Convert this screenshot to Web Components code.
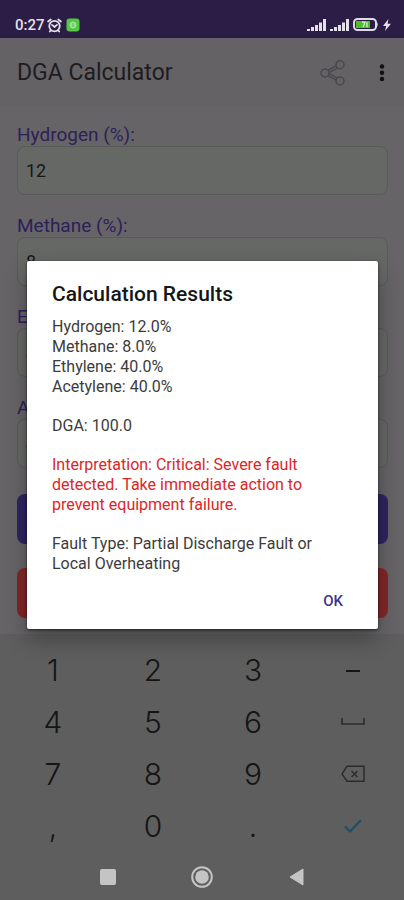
<!DOCTYPE html>
<html lang="en">
<head>
<meta charset="utf-8">
<meta name="viewport" content="width=device-width, initial-scale=1">
<title>DGA Calculator</title>
<style>
  body { margin: 0; font-family: Roboto, "Liberation Sans", sans-serif; background: #676468; }
</style>
</head>
<body>
<dga-app></dga-app>

<script>
const define = (name, html, setup) => {
  const template = document.createElement('template');
  template.innerHTML = html;
  customElements.define(name, class extends HTMLElement {
    constructor() {
      super();
      this.attachShadow({ mode: 'open' }).append(template.content.cloneNode(true));
    }
    connectedCallback() { if (setup) setup(this, this.shadowRoot); }
  });
};

define('status-bar', `
<style>
  :host { display: flex; justify-content: space-between; height: 38px; box-sizing: border-box;
    padding: 12px 13px 0 15px; background: #2b1d45; color: #e4e0ea; }
  div { display: flex; align-items: center; height: 26px; }
  time { font-size: 15px; font-weight: 500; line-height: 20px; }
  .left { gap: 2px; }
  .right { gap: 4px; }
  svg { display: block; }
  .app { margin-left: 2px; }
</style>
<div class="left">
  <time>0:27</time>
  <svg width="15" height="15" viewBox="0 0 16 16" fill="none" stroke="#e4e0ea" stroke-width="1.9" stroke-linecap="round">
    <circle cx="8" cy="8.6" r="5.6"/><path d="M1.2 3.8 4 1.6M14.8 3.8 12 1.6M5.4 7.4 8 9.6l2.6-2.2M4 13.2l-1 1.2M12 13.2l1 1.2"/>
  </svg>
  <svg class="app" width="14" height="14" viewBox="0 0 14 14">
    <rect x=".5" y=".5" width="13" height="13" rx="3" fill="#55c746"/>
    <circle cx="7" cy="7" r="3" fill="#8fe084" stroke="#a5e99c"/><path d="M7 5v4" stroke="#55c746"/>
  </svg>
</div>
<div class="right">
  <svg width="19" height="13" viewBox="0 0 19 13" fill="#e4e0ea"><path d="M0 10h3v2H0zM4 8h3v4H4zM8 6h3v6H8zM12 3.500h3V12h-3zM16 0h3v12h-3z"/></svg>
  <svg width="19" height="13" viewBox="0 0 19 13" fill="#e4e0ea"><path d="M0 10h3v2H0zM4 8h3v4H4zM8 6h3v6H8zM12 3.500h3V12h-3zM16 0h3v12h-3z"/></svg>
  <svg width="26" height="14" viewBox="0 0 26 14">
    <rect x="1" y="1" width="22" height="11" rx="3.500" fill="#2b1d45" stroke="#dedbe2" stroke-width="2"/>
    <path d="M23.500 3.500q2.500 3 0 6z" fill="#dedbe2"/>
    <rect x="3" y="3" width="14" height="7" fill="#4cc02c"/>
    <path d="M9 4.200h3l-2 5M14 4.200v5" fill="none" stroke="#d9f5d0" stroke-width="1.200"/>
  </svg>
  <svg width="8" height="12" viewBox="0 0 8 12" fill="#e4e0ea"><path d="M5.400 0 0 7h3.200L2 12l6-7.200H4.600z"/></svg>
</div>
`);

define('app-bar', `
<style>
  :host { display: flex; align-items: center; height: 68px; box-sizing: border-box; padding: 2px 13px 0 17px;
    background: #646265; color: #1e1c20; }
  h1 { margin: 0; flex: 1; font-size: 23px; font-weight: 400; line-height: 28px; }
  button { border: 0; padding: 0; background: none; display: block; }
  .share { margin-right: 27px; }
  svg { display: block; }
</style>
<h1><slot></slot></h1>
<button class="share" aria-label="Share">
  <svg width="26" height="26" viewBox="0 0 26 26" fill="none" stroke="#49474b" stroke-width="1.400">
    <circle cx="5" cy="13" r="4"/><circle cx="20" cy="4.800" r="4"/><circle cx="20" cy="21" r="4"/>
    <path d="M8 10.400 15.800 5.900M9 12.700 17.200 8M8 15.600l8 4.300M9 13.400l8.200 4.600"/>
  </svg>
</button>
<button aria-label="More options">
  <svg width="18" height="20" viewBox="0 0 18 20" fill="#111013"><circle cx="9" cy="3.500" r="2.200"/><circle cx="9" cy="9.800" r="2.200"/><circle cx="9" cy="16" r="2.200"/></svg>
</button>
`);

define('gas-field', `
<style>
  :host { display: block; }
  label { display: block; font-size: 19px; line-height: 22px; color: #2c2158; }
  input { display: block; width: 100%; height: 49px; box-sizing: border-box; padding: 0 8px; margin: 0; outline: 0;
    border: 1px solid #595b59; border-radius: 8px; background: #666866; color: #181818;
    font-family: inherit; font-size: 18px; }
</style>
<label for="value"></label>
<input id="value" inputmode="decimal">
`, (host, root) => {
  root.querySelector('label').textContent = host.getAttribute('label');
  root.querySelector('input').value = host.getAttribute('value');
});

define('action-button', `
<style>
  :host { display: block; }
  button { display: block; width: 100%; height: 50px; border: 0; border-radius: 8px; background: var(--fill); }
</style>
<button></button>
`, (host, root) => root.querySelector('button').setAttribute('aria-label', host.getAttribute('label')));

define('gas-form', `
<style>
  :host { display: flex; flex-direction: column; gap: 20px; padding: 18px 16px 16px 17px; flex: 1; background: #676468; }
  .actions { display: flex; flex-direction: column; gap: 24px; margin-top: 6px; }
</style>
<gas-field label="Hydrogen (%):" value="12"></gas-field>
<gas-field label="Methane (%):" value="8"></gas-field>
<gas-field label="Ethylene (%):" value="40"></gas-field>
<gas-field label="Acetylene (%):" value="40"></gas-field>
<div class="actions">
  <action-button label="Calculate" style="--fill:#2e2560"></action-button>
  <action-button label="Clear" style="--fill:#822628"></action-button>
</div>
`);

define('number-pad', `
<style>
  :host { display: grid; grid-template-columns: repeat(4, 1fr); grid-auto-rows: 52px; padding: 10px 1px 2px 3px; background: #5e5e5e; }
  button { border: 0; padding: 0; background: none; color: #151515; display: flex; align-items: center; justify-content: center;
    font-family: Inter, "Liberation Sans", sans-serif; font-size: 30px; line-height: 40px; font-weight: 300; }
  svg { display: block; fill: none; }
</style>
<button>1</button><button>2</button><button>3</button>
<button aria-label="Minus"><svg width="14" height="4" stroke="#151515" stroke-width="2"><path d="M0 3h14"/></svg></button>
<button>4</button><button>5</button><button>6</button>
<button aria-label="Space"><svg width="24" height="8" stroke="#2b2b2b" stroke-width="1.600"><path d="M1 0v6h22V0"/></svg></button>
<button>7</button><button>8</button><button>9</button>
<button aria-label="Delete"><svg width="24" height="18" viewBox="0 0 24 18" stroke="#2b2b2b" stroke-width="1.400"><path d="M6 1.200h17v15H6L1 9zM10.500 6l6 6M16.500 6l-6 6"/></svg></button>
<button>,</button><button>0</button><button>.</button>
<button aria-label="Done"><svg width="18" height="14" viewBox="0 0 18 14" stroke="#174f70" stroke-width="2"><path d="M1 7.500 6 12.500 17 1"/></svg></button>
`);

define('nav-bar', `
<style>
  :host { display: grid; grid-template-columns: repeat(3, 94px); justify-content: center; align-items: center; height: 46px;
    background: #5e5e5e; }
  button { border: 0; padding: 0; background: none; display: flex; justify-content: center; }
  svg { display: block; }
</style>
<button aria-label="Recent apps"><svg width="16" height="16"><rect width="16" height="16" rx="2" fill="#c4c4c4"/></svg></button>
<button aria-label="Home"><svg width="22" height="22" viewBox="0 0 22 22"><circle cx="11" cy="11" r="9.800" fill="none" stroke="#c4c4c4" stroke-width="2"/><circle cx="11" cy="11" r="6.800" fill="#c4c4c4"/></svg></button>
<button aria-label="Back"><svg width="15" height="18" viewBox="0 0 15 18"><path d="M14 1v16L1 9z" fill="#c4c4c4" stroke="#c4c4c4" stroke-linejoin="round"/></svg></button>
`);

define('result-dialog', `
<style>
  :host { position: absolute; inset: 0; display: flex; align-items: center; padding: 0 26px 10px 27px; }
  section { flex: 1; box-sizing: border-box; padding: 20px 25px 10px; background: #fff; border-radius: 2px;
    box-shadow: 0 10px 22px rgba(0,0,0,.3), 0 1px 3px rgba(0,0,0,.6); }
  h2 { margin: 0 0 10px; font-size: 21px; font-weight: 500; line-height: 26px; color: #161616; }
  .body { display: flex; flex-direction: column; gap: 19px; font-size: 16px; line-height: 20px; color: #3c3c3c; }
  ::slotted(p) { margin: 0; }
  footer { display: flex; justify-content: flex-end; margin-top: 9px; }
  button { border: 0; background: none; padding: 0 10px; height: 36px; font-family: inherit; font-size: 15px; font-weight: 500;
    color: #43328f; }
</style>
<section role="dialog" aria-labelledby="title">
  <h2 id="title">Calculation Results</h2>
  <div class="body"><slot></slot></div>
  <footer><button>OK</button></footer>
</section>
`);

define('dga-app', `
<style>
  :host { position: relative; display: flex; flex-direction: column; min-height: 100vh; }
  .alert { color: #dc2626; }
</style>
<status-bar></status-bar>
<app-bar>DGA Calculator</app-bar>
<gas-form></gas-form>
<number-pad></number-pad>
<nav-bar></nav-bar>
<result-dialog>
  <p>Hydrogen: 12.0%<br>Methane: 8.0%<br>Ethylene: 40.0%<br>Acetylene: 40.0%</p>
  <p>DGA: 100.0</p>
  <p class="alert">Interpretation: Critical: Severe fault detected. Take immediate action to prevent equipment failure.</p>
  <p>Fault Type: Partial Discharge Fault or Local Overheating</p>
</result-dialog>
`);
</script>
</body>
</html>
